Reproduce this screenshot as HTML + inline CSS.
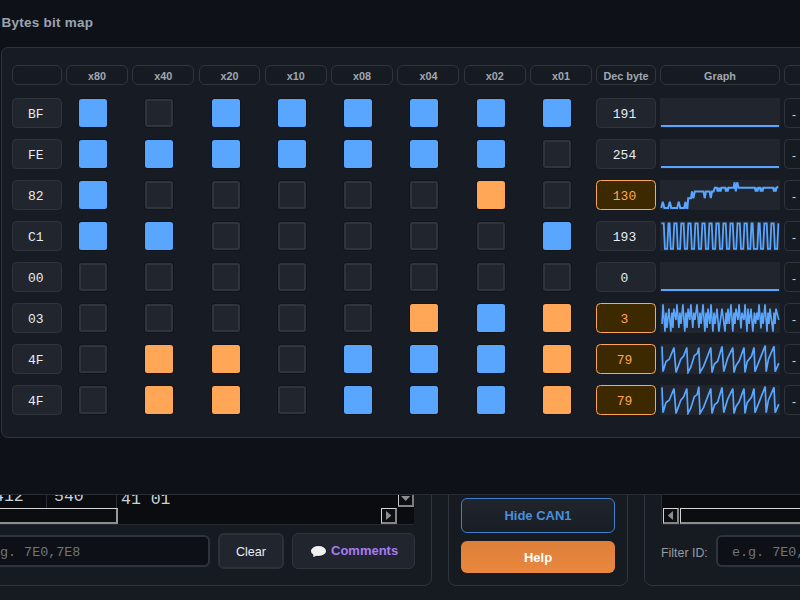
<!DOCTYPE html>
<html><head><meta charset="utf-8"><title>Bytes bit map</title>
<style>
*{box-sizing:border-box;margin:0;padding:0}
html,body{width:800px;height:600px;overflow:hidden;background:#161b22;font-family:"Liberation Sans",sans-serif;}
body{position:relative}
.abs{position:absolute}
#under{position:absolute;left:0;top:0;width:800px;height:600px;background:#161b22;overflow:hidden}
#overlay{position:absolute;left:0;top:0;width:800px;height:495px;background:#0e1118;overflow:hidden}
#title{position:absolute;left:1.5px;top:15px;font-weight:bold;font-size:13.5px;line-height:16px;color:#9aa3af;white-space:nowrap;letter-spacing:0.25px}
#panel{position:absolute;left:1px;top:47px;width:830px;height:391px;background:#171b23;border:1px solid #30343e;border-radius:7px}
.h{position:absolute;top:65px;height:20px;border:1px solid #30363d;border-radius:6px;background:#161a21;color:#a0a8b3;font-weight:bold;font-size:10.8px;line-height:20px;text-align:center;white-space:nowrap}
.c{position:absolute;height:30px;border:1px solid #30353d;border-radius:4.5px;background:#21252d;color:#e6edf3;font-family:"Liberation Mono",monospace;font-size:13px;line-height:30px;padding-top:1px;text-align:center;white-space:nowrap}
.c.o{background:#3d2900;border-color:#ffa657;color:#ffa657}
.c.d{background:#161a21;color:#c9d1d9}
.b{position:absolute;width:28px;height:28px;border-radius:2.5px;background:#21252d;border:2px solid #30353d;box-shadow:0 0 0 1px rgba(10,12,18,0.35)}
.b.s{background:#58a6ff;border:none}
.b.og{background:#ffa657;border:none}
.g{position:absolute;left:660px;width:120px;height:30px;background:#21252d;overflow:hidden}
.g svg{display:block}
.g path{fill:none;stroke:#58a6ff;stroke-linejoin:miter;stroke-linecap:butt}
</style></head><body>
<div id="under">

<div class="abs" style="left:-20px;top:470px;width:452px;height:116px;border:1px solid #30353d;border-radius:8px"></div>
<div class="abs" style="left:448px;top:470px;width:180px;height:116px;border:1px solid #30353d;border-radius:8px"></div>
<div class="abs" style="left:644px;top:470px;width:200px;height:116px;border:1px solid #30353d;border-radius:8px"></div>

<!-- left table -->
<div class="abs" style="left:-10px;top:480px;width:424px;height:45px;background:#0a0c10;border-bottom:1px solid #262930"></div>
<div class="abs" style="left:46px;top:494px;width:1px;height:14px;background:#2b3038"></div>
<div class="abs" style="left:116px;top:494px;width:1px;height:30px;background:#2b3038"></div>
<div class="abs mono" style="left:-6px;top:487px;font:16.5px/20px 'Liberation Mono',monospace;color:#c9d1d9">412</div>
<div class="abs mono" style="left:54px;top:487px;font:16.5px/20px 'Liberation Mono',monospace;color:#c9d1d9">540</div>
<div class="abs mono" style="left:121px;top:490px;font:16.5px/20px 'Liberation Mono',monospace;color:#c9d1d9">41 01</div>
<!-- h scrollbar thumb -->
<div class="abs" style="left:-10px;top:508px;width:128px;height:16px;border-top:1px solid #d4d4d4;border-left:1px solid #d4d4d4;border-right:2px solid #9a9a9a;border-bottom:2px solid #8c8c8c;background:#0b0d11"></div>
<!-- right arrow button -->
<div class="abs" style="left:381px;top:508px;width:16px;height:16px;border-top:1px solid #d4d4d4;border-left:1px solid #d4d4d4;border-right:2px solid #858585;border-bottom:2px solid #858585;background:#0c0e12"></div>
<svg class="abs" style="left:381px;top:508px" width="16" height="16"><path d="M5,3 L10.4,7.4 L5,12 Z" fill="#8a8d91"/></svg>
<!-- down arrow button -->
<div class="abs" style="left:398px;top:488px;width:16px;height:19px;border-top:1px solid #d4d4d4;border-left:1px solid #c8c8c8;border-right:2px solid #7c7c7c;border-bottom:2px solid #858585;background:#0c0e12"></div>
<svg class="abs" style="left:398px;top:494px" width="16" height="12"><path d="M3,2 L12.4,2 L7.7,7 Z" fill="#8a8d91"/></svg>

<!-- input left -->
<div class="abs" style="left:-20px;top:535px;width:230px;height:32px;border:2px solid #2f343c;border-radius:6px;background:#0d1117"></div>
<div class="abs" style="left:0px;top:543px;font:13.4px/20px 'Liberation Mono',monospace;color:#6e7681;white-space:pre">g. 7E0,7E8</div>
<!-- Clear -->
<div class="abs" style="left:218px;top:533px;width:66px;height:36px;border:2px solid #2d323a;border-radius:6px;background:#21252d;color:#e6edf3;font-size:12.6px;line-height:35px;text-align:center">Clear</div>
<!-- Comments -->
<div class="abs" style="left:292px;top:533px;width:123px;height:36px;border:1px solid #30353d;border-radius:6px;background:#21252d"></div>
<svg class="abs" style="left:308px;top:542px" width="22" height="18" viewBox="308 542 22 18"><ellipse cx="318.5" cy="551" rx="8.2" ry="5.7" fill="#14171c"/><ellipse cx="318.5" cy="551" rx="7.6" ry="5.1" fill="#f0f0f0"/><path d="M313.4,553.6 L313.3,556.9 L317.4,555.6 Z" fill="#f0f0f0"/></svg>
<div class="abs" style="left:331px;top:541px;font-weight:bold;font-size:13px;line-height:20px;color:#a67cf6;white-space:nowrap">Comments</div>

<!-- Hide CAN1 -->
<div class="abs" style="left:461px;top:498px;width:154px;height:35px;border:1px solid #3f7fce;border-radius:6px;background:linear-gradient(#20242c,#191d24);color:#4a8fdc;font-weight:bold;font-size:13px;line-height:33px;text-align:center">Hide CAN1</div>
<!-- Help -->
<div class="abs" style="left:461px;top:541px;width:154px;height:32px;border-radius:6px;background:linear-gradient(#dd7f3a,#ea873e);color:#ffffff;font-weight:bold;font-size:13px;line-height:34px;text-align:center">Help</div>

<!-- right table -->
<div class="abs" style="left:662px;top:480px;width:150px;height:45px;background:#0a0c10;border-bottom:1px solid #262930"></div>
<div class="abs" style="left:661px;top:494px;width:1px;height:30px;background:#2b3038"></div>
<div class="abs" style="left:663px;top:508px;width:16px;height:16px;border-top:1px solid #d4d4d4;border-left:1px solid #d4d4d4;border-right:2px solid #858585;border-bottom:2px solid #858585;background:#0c0e12"></div>
<svg class="abs" style="left:663px;top:508px" width="16" height="16"><path d="M10,3 L4.8,7.4 L10,12 Z" fill="#8a8d91"/></svg>
<div class="abs" style="left:680px;top:508px;width:140px;height:16px;border-top:1px solid #d4d4d4;border-left:1px solid #d4d4d4;border-bottom:2px solid #8c8c8c;background:#0b0d11"></div>
<div class="abs" style="left:661px;top:543px;font-size:12.4px;line-height:20px;color:#929ba6;white-space:nowrap">Filter ID:</div>
<div class="abs" style="left:716px;top:535px;width:120px;height:32px;border:2px solid #2f343c;border-radius:6px;background:#0d1117"></div>
<div class="abs" style="left:732px;top:543px;font:13.4px/20px 'Liberation Mono',monospace;color:#6e7681;white-space:pre">e.g. 7E0,7E8</div>
</div>
<div id="overlay">
<div class="abs" style="left:0;top:494px;width:800px;height:1px;background:#2a2d34"></div>
<div id="title">Bytes bit map</div>
<div id="panel"></div>
<div class="h" style="left:12px;width:50px"></div>
<div class="h" style="left:66.00px;width:61.9px">x80</div>
<div class="h" style="left:132.29px;width:61.9px">x40</div>
<div class="h" style="left:198.58px;width:61.9px">x20</div>
<div class="h" style="left:264.87px;width:61.9px">x10</div>
<div class="h" style="left:331.16px;width:61.9px">x08</div>
<div class="h" style="left:397.45px;width:61.9px">x04</div>
<div class="h" style="left:463.74px;width:61.9px">x02</div>
<div class="h" style="left:530.03px;width:61.9px">x01</div>
<div class="h" style="left:596px;width:60px">Dec byte</div>
<div class="h" style="left:660px;width:120px">Graph</div>
<div class="h" style="left:784px;width:60px"></div>
<div class="c" style="left:12px;top:98px;width:50px;padding-right:2.4px">BF</div>
<div class="b s" style="left:79.00px;top:99px"></div>
<div class="b" style="left:145.29px;top:99px"></div>
<div class="b s" style="left:211.58px;top:99px"></div>
<div class="b s" style="left:277.87px;top:99px"></div>
<div class="b s" style="left:344.16px;top:99px"></div>
<div class="b s" style="left:410.45px;top:99px"></div>
<div class="b s" style="left:476.74px;top:99px"></div>
<div class="b s" style="left:543.03px;top:99px"></div>
<div class="c" style="left:596px;top:98px;width:60px;padding-right:3px">191</div>
<div class="g" style="top:98px"><svg width="120" height="30" viewBox="0 0 120 30"><path d="M1,28 L119,28" stroke-width="2"/></svg></div>
<div class="c d" style="left:784px;top:98px;width:60px;text-align:left;padding-left:7px;font-family:'Liberation Sans',sans-serif;font-size:12px">-</div>
<div class="c" style="left:12px;top:139px;width:50px;padding-right:2.4px">FE</div>
<div class="b s" style="left:79.00px;top:140px"></div>
<div class="b s" style="left:145.29px;top:140px"></div>
<div class="b s" style="left:211.58px;top:140px"></div>
<div class="b s" style="left:277.87px;top:140px"></div>
<div class="b s" style="left:344.16px;top:140px"></div>
<div class="b s" style="left:410.45px;top:140px"></div>
<div class="b s" style="left:476.74px;top:140px"></div>
<div class="b" style="left:543.03px;top:140px"></div>
<div class="c" style="left:596px;top:139px;width:60px;padding-right:3px">254</div>
<div class="g" style="top:139px"><svg width="120" height="30" viewBox="0 0 120 30"><path d="M1,28 L119,28" stroke-width="2"/></svg></div>
<div class="c d" style="left:784px;top:139px;width:60px;text-align:left;padding-left:7px;font-family:'Liberation Sans',sans-serif;font-size:12px">-</div>
<div class="c" style="left:12px;top:180px;width:50px;padding-right:2.4px">82</div>
<div class="b s" style="left:79.00px;top:181px"></div>
<div class="b" style="left:145.29px;top:181px"></div>
<div class="b" style="left:211.58px;top:181px"></div>
<div class="b" style="left:277.87px;top:181px"></div>
<div class="b" style="left:344.16px;top:181px"></div>
<div class="b" style="left:410.45px;top:181px"></div>
<div class="b og" style="left:476.74px;top:181px"></div>
<div class="b" style="left:543.03px;top:181px"></div>
<div class="c o" style="left:596px;top:180px;width:60px;padding-right:3px">130</div>
<div class="g" style="top:180px"><svg width="120" height="30" viewBox="0 0 120 30"><path d="M1.3,28.0 L2.8,21.8 L4.4,28.0 L8.2,28.0 L9.8,21.8 L11.3,28.0 L17.2,28.0 L18.7,21.8 L20.3,28.0 L24.2,28.0 L25.5,21.8 L26.4,28.0 L27.4,28.0 L28.2,18.2 L31.0,18.2 L32.0,11.4 L33.4,18.2 L34.8,11.4 L43.5,11.4 L44.7,18.2 L46.0,11.4 L49.6,11.4 L50.8,18.2 L52.0,11.4 L53.6,11.4 L54.8,7.7 L56.8,7.7 L57.6,11.6 L58.4,7.7 L59.2,11.6 L60.0,7.7 L60.6,11.6 L61.4,7.7 L65.2,7.7 L66.0,11.6 L66.8,7.7 L67.6,11.6 L68.6,7.7 L71.5,7.7 L73.6,7.7 L74.6,2.3 L75.8,11.4 L77.2,2.3 L78.6,7.7 L94.8,7.7 L95.8,11.6 L96.6,7.7 L97.4,11.6 L98.4,7.7 L100.0,7.7 L100.8,11.6 L101.6,7.7 L102.4,11.6 L103.4,7.7 L113.2,7.7 L114.0,11.6 L114.8,7.7 L115.6,11.6 L116.6,7.7 L118.2,6.6" stroke-width="2"/></svg></div>
<div class="c d" style="left:784px;top:180px;width:60px;text-align:left;padding-left:7px;font-family:'Liberation Sans',sans-serif;font-size:12px">-</div>
<div class="c" style="left:12px;top:221px;width:50px;padding-right:2.4px">C1</div>
<div class="b s" style="left:79.00px;top:222px"></div>
<div class="b s" style="left:145.29px;top:222px"></div>
<div class="b" style="left:211.58px;top:222px"></div>
<div class="b" style="left:277.87px;top:222px"></div>
<div class="b" style="left:344.16px;top:222px"></div>
<div class="b" style="left:410.45px;top:222px"></div>
<div class="b" style="left:476.74px;top:222px"></div>
<div class="b s" style="left:543.03px;top:222px"></div>
<div class="c" style="left:596px;top:221px;width:60px;padding-right:3px">193</div>
<div class="g" style="top:221px"><svg width="120" height="30" viewBox="0 0 120 30"><path d="M1.40,2.4 L2.57,2.4 L3.74,2.4 L4.91,27.8 L6.08,27.8 L7.25,27.8 L8.42,2.4 L9.59,2.4 L10.76,27.8 L11.93,27.8 L13.10,27.8 L14.27,2.4 L15.44,2.4 L16.61,2.4 L17.78,27.8 L18.95,27.8 L20.12,27.8 L21.29,2.4 L22.46,2.4 L23.63,2.4 L24.80,27.8 L25.97,27.8 L27.14,27.8 L28.31,2.4 L29.48,2.4 L30.65,2.4 L31.82,27.8 L32.99,27.8 L34.16,27.8 L35.33,2.4 L36.50,2.4 L37.67,2.4 L38.84,27.8 L40.01,27.8 L41.18,27.8 L42.35,2.4 L43.52,2.4 L44.69,2.4 L45.86,27.8 L47.03,27.8 L48.20,27.8 L49.37,2.4 L50.54,2.4 L51.71,2.4 L52.88,27.8 L54.05,27.8 L55.22,27.8 L56.39,2.4 L57.56,2.4 L58.73,2.4 L59.90,27.8 L61.07,27.8 L62.24,27.8 L63.41,2.4 L64.58,2.4 L65.75,2.4 L66.92,27.8 L68.09,27.8 L69.26,27.8 L70.43,2.4 L71.60,2.4 L72.77,2.4 L73.94,27.8 L75.11,27.8 L76.28,27.8 L77.45,2.4 L78.62,2.4 L79.79,2.4 L80.96,27.8 L82.13,27.8 L83.30,27.8 L84.47,2.4 L85.64,2.4 L86.81,2.4 L87.98,27.8 L89.15,27.8 L90.32,27.8 L91.49,2.4 L92.66,2.4 L93.83,27.8 L95.00,27.8 L96.17,27.8 L97.34,27.8 L98.51,2.4 L99.68,2.4 L100.85,27.8 L102.02,27.8 L103.19,27.8 L104.36,2.4 L105.53,2.4 L106.70,2.4 L107.87,27.8 L109.04,27.8 L110.21,27.8 L111.38,2.4 L112.55,2.4 L113.72,2.4 L114.89,27.8 L116.06,27.8 L117.23,27.8 L118.40,2.4" stroke-width="1.8"/></svg></div>
<div class="c d" style="left:784px;top:221px;width:60px;text-align:left;padding-left:7px;font-family:'Liberation Sans',sans-serif;font-size:12px">-</div>
<div class="c" style="left:12px;top:262px;width:50px;padding-right:2.4px">00</div>
<div class="b" style="left:79.00px;top:263px"></div>
<div class="b" style="left:145.29px;top:263px"></div>
<div class="b" style="left:211.58px;top:263px"></div>
<div class="b" style="left:277.87px;top:263px"></div>
<div class="b" style="left:344.16px;top:263px"></div>
<div class="b" style="left:410.45px;top:263px"></div>
<div class="b" style="left:476.74px;top:263px"></div>
<div class="b" style="left:543.03px;top:263px"></div>
<div class="c" style="left:596px;top:262px;width:60px;padding-right:3px">0</div>
<div class="g" style="top:262px"><svg width="120" height="30" viewBox="0 0 120 30"><path d="M1,28 L119,28" stroke-width="2"/></svg></div>
<div class="c d" style="left:784px;top:262px;width:60px;text-align:left;padding-left:7px;font-family:'Liberation Sans',sans-serif;font-size:12px">-</div>
<div class="c" style="left:12px;top:303px;width:50px;padding-right:2.4px">03</div>
<div class="b" style="left:79.00px;top:304px"></div>
<div class="b" style="left:145.29px;top:304px"></div>
<div class="b" style="left:211.58px;top:304px"></div>
<div class="b" style="left:277.87px;top:304px"></div>
<div class="b" style="left:344.16px;top:304px"></div>
<div class="b og" style="left:410.45px;top:304px"></div>
<div class="b s" style="left:476.74px;top:304px"></div>
<div class="b og" style="left:543.03px;top:304px"></div>
<div class="c o" style="left:596px;top:303px;width:60px;padding-right:3px">3</div>
<div class="g" style="top:303px"><svg width="120" height="30" viewBox="0 0 120 30"><path d="M2.0,21.0 L3.0,1.4 L5.0,28.6 L6.0,9.6 L7.0,25.0 L8.9,5.6 L10.8,28.6 L11.9,9.6 L13.0,25.0 L13.8,5.6 L16.0,17.0 L16.9,1.4 L18.9,25.0 L19.9,9.6 L21.0,21.0 L22.9,1.4 L24.8,28.6 L25.9,9.6 L27.0,25.0 L28.1,5.6 L29.8,17.0 L30.9,1.4 L32.8,25.0 L33.9,9.6 L35.0,17.0 L37.0,1.4 L38.9,25.0 L40.0,9.6 L41.1,21.0 L43.0,1.4 L44.9,28.6 L46.0,9.6 L47.1,25.0 L48.0,5.6 L49.9,21.0 L51.0,1.4 L52.9,28.6 L54.0,9.6 L55.1,21.0 L57.0,5.6 L58.9,28.6 L62.0,5.6 L65.0,28.6 L66.0,9.6 L67.0,21.0 L68.0,5.6 L69.2,21.0 L71.0,1.4 L72.8,28.6 L74.0,9.6 L75.0,21.0 L76.0,5.6 L78.0,17.0 L79.0,1.4 L81.0,25.4 L82.0,9.6 L84.0,17.0 L85.0,1.4 L87.0,28.6 L88.0,5.6 L89.2,21.0 L91.0,5.6 L92.8,28.6 L94.4,9.6 L95.6,21.0 L96.8,9.6 L98.0,17.0 L99.0,1.4 L101.0,25.4 L102.0,9.6 L103.2,21.0 L105.0,1.4 L107.0,28.6 L108.0,9.6 L109.0,21.0 L110.0,5.6 L113.0,28.6 L114.0,9.6 L115.0,21.0 L116.0,5.6 L118.8,17.0" stroke-width="1.6"/></svg></div>
<div class="c d" style="left:784px;top:303px;width:60px;text-align:left;padding-left:7px;font-family:'Liberation Sans',sans-serif;font-size:12px">-</div>
<div class="c" style="left:12px;top:344px;width:50px;padding-right:2.4px">4F</div>
<div class="b" style="left:79.00px;top:345px"></div>
<div class="b og" style="left:145.29px;top:345px"></div>
<div class="b og" style="left:211.58px;top:345px"></div>
<div class="b" style="left:277.87px;top:345px"></div>
<div class="b s" style="left:344.16px;top:345px"></div>
<div class="b s" style="left:410.45px;top:345px"></div>
<div class="b s" style="left:476.74px;top:345px"></div>
<div class="b og" style="left:543.03px;top:345px"></div>
<div class="c o" style="left:596px;top:344px;width:60px;padding-right:3px">79</div>
<div class="g" style="top:344px"><svg width="120" height="30" viewBox="0 0 120 30"><path d="M2.0,2.4 L3.0,27.6 L6.0,17.6 L9.2,15.2 L14.0,3.6 L16.0,28.4 L20.8,15.2 L23.6,12.0 L26.8,3.6 L28.0,28.4 L30.8,23.2 L34.4,11.6 L37.2,9.6 L38.8,3.6 L40.0,28.4 L43.6,22.4 L50.8,3.6 L52.0,28.4 L54.4,20.0 L57.6,17.2 L62.0,2.4 L63.8,27.6 L67.6,14.4 L72.8,3.6 L74.0,28.4 L76.0,21.6 L79.2,16.8 L84.0,3.6 L85.0,28.4 L87.2,17.6 L91.6,12.0 L94.0,3.6 L95.0,27.6 L105.2,1.6 L106.2,27.6 L108.4,15.2 L114.0,2.4 L115.2,27.6 L118.8,19.2" stroke-width="1.7"/></svg></div>
<div class="c d" style="left:784px;top:344px;width:60px;text-align:left;padding-left:7px;font-family:'Liberation Sans',sans-serif;font-size:12px">-</div>
<div class="c" style="left:12px;top:385px;width:50px;padding-right:2.4px">4F</div>
<div class="b" style="left:79.00px;top:386px"></div>
<div class="b og" style="left:145.29px;top:386px"></div>
<div class="b og" style="left:211.58px;top:386px"></div>
<div class="b" style="left:277.87px;top:386px"></div>
<div class="b s" style="left:344.16px;top:386px"></div>
<div class="b s" style="left:410.45px;top:386px"></div>
<div class="b s" style="left:476.74px;top:386px"></div>
<div class="b og" style="left:543.03px;top:386px"></div>
<div class="c o" style="left:596px;top:385px;width:60px;padding-right:3px">79</div>
<div class="g" style="top:385px"><svg width="120" height="30" viewBox="0 0 120 30"><path d="M2.0,2.4 L3.0,27.6 L6.0,17.6 L9.2,15.2 L14.0,3.6 L16.0,28.4 L20.8,15.2 L23.6,12.0 L26.8,3.6 L28.0,28.4 L30.8,23.2 L34.4,11.6 L37.2,9.6 L38.8,1.6 L40.0,28.4 L43.6,22.4 L50.8,3.6 L52.0,28.4 L54.4,20.0 L57.6,17.2 L62.0,2.4 L63.8,27.6 L67.6,14.4 L72.8,3.6 L74.0,28.4 L76.0,21.6 L79.2,16.8 L84.0,3.6 L85.0,28.4 L87.2,17.6 L91.6,12.0 L94.0,3.6 L95.0,27.6 L105.2,1.6 L106.2,27.6 L108.4,15.2 L114.0,2.4 L115.2,27.6 L118.8,19.2" stroke-width="1.7"/></svg></div>
<div class="c d" style="left:784px;top:385px;width:60px;text-align:left;padding-left:7px;font-family:'Liberation Sans',sans-serif;font-size:12px">-</div>
</div>
</body></html>
